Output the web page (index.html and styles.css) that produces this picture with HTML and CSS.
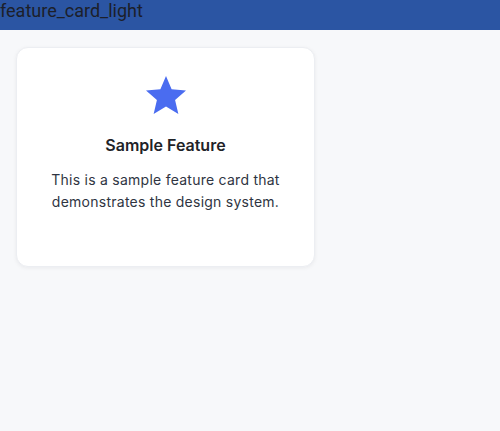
FILE: index.html
```html
<!DOCTYPE html>
<html lang="en">
<head>
<meta charset="utf-8">
<title>feature_card_light</title>
<link rel="stylesheet" href="styles.css">
</head>
<body>
<header class="topbar">feature_card_light</header>
<main class="page">
  <div class="card">
    <div class="card-icon">
      <svg viewBox="0 0 24 24" width="48" height="48" aria-hidden="true">
        <path fill="currentColor" d="M12 17.27L18.18 21l-1.64-7.03L22 9.24l-7.19-.61L12 2 9.19 8.63 2 9.24l5.46 4.73L5.82 21z"/>
      </svg>
    </div>
    <h3 class="card-title">Sample Feature</h3>
    <p class="card-text">This is a sample feature card that demonstrates the design system.</p>
  </div>
</main>
</body>
</html>
```
FILE: styles.css
```css
html, body {
  margin: 0;
  padding: 0;
}
body {
  background: #f7f8fa;
  font-family: Inter, "Noto Sans", sans-serif;
  width: 500px;
  height: 431px;
  overflow: hidden;
}
.topbar {
  height: 30px;
  background: #2b55a3;
  color: #1c1f2a;
  font-family: Roboto, "Liberation Sans", sans-serif;
  font-size: 18px;
  line-height: 21px;
  padding: 0;
  box-sizing: border-box;
}
.page {
  padding: 17px 16px;
}
.card {
  width: 299px;
  box-sizing: border-box;
  background: #ffffff;
  border: 1px solid #eceef2;
  border-radius: 12px;
  box-shadow: 0 1px 4px rgba(16, 24, 40, 0.06);
  padding: 24px 24px 52px;
  text-align: center;
}
.card-icon {
  display: flex;
  justify-content: center;
  color: #4a6cf0;
  height: 48px;
}
.card-icon svg {
  display: block;
}
.card-title {
  margin: 13px 0 0;
  font-size: 16px;
  font-weight: 600;
  line-height: 24px;
  color: #1f2328;
}
.card-text {
  margin: 12px 0 0;
  font-size: 14px;
  line-height: 22.4px;
  letter-spacing: 0.25px;
  color: #2f3542;
}
```
